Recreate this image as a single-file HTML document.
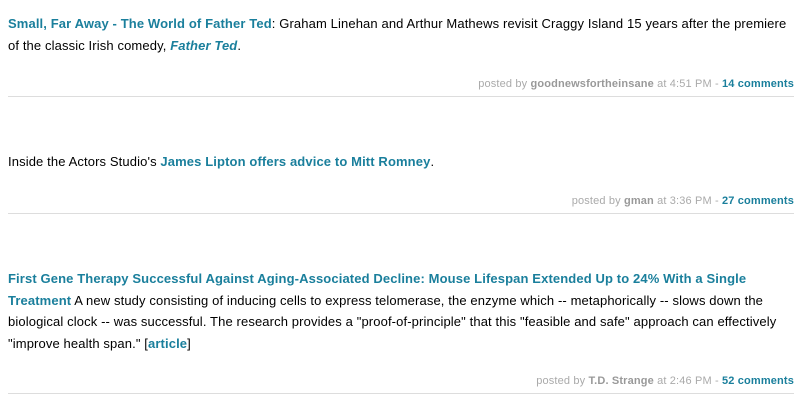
<!DOCTYPE html>
<html><head><style>
body{margin:0;width:802px;height:408px;background:#fff;font-family:"Liberation Sans",Arial,sans-serif;overflow:hidden;position:relative}
.t{position:absolute;left:8px;width:784px;font-size:13px;line-height:21.5px;color:#000;letter-spacing:0.12px}
a{color:#1a7f9c;font-weight:bold;text-decoration:none}
.b{position:absolute;right:8px;font-size:11px;color:#aaa;line-height:14px;letter-spacing:0.15px}
.b b{color:#999}
.r{position:absolute;left:8px;width:786px;height:1px;background:#ddd}
</style></head><body>
<div class="t" style="top:13px"><a>Small, Far Away - The World of Father Ted</a>: Graham Linehan and Arthur Mathews revisit Craggy Island 15 years after the premiere of the classic Irish comedy, <a><i>Father Ted</i></a>.</div>
<div class="b" style="top:77px">posted by <b>goodnewsfortheinsane</b> at 4:51 PM - <a>14 comments</a></div>
<div class="r" style="top:96px"></div>
<div class="t" style="top:151px">Inside the Actors Studio's <a>James Lipton offers advice to Mitt Romney</a>.</div>
<div class="b" style="top:194px">posted by <b>gman</b> at 3:36 PM - <a>27 comments</a></div>
<div class="r" style="top:213px"></div>
<div class="t" style="top:268px"><a>First Gene Therapy Successful Against Aging-Associated Decline: Mouse Lifespan Extended Up to 24% With a Single Treatment</a> A new study consisting of inducing cells to express telomerase, the enzyme which -- metaphorically -- slows down the biological clock -- was successful. The research provides a "proof-of-principle" that this "feasible and safe" approach can effectively "improve health span." [<a>article</a>]</div>
<div class="b" style="top:374px">posted by <b>T.D. Strange</b> at 2:46 PM - <a>52 comments</a></div>
<div class="r" style="top:393px"></div>
</body></html>
